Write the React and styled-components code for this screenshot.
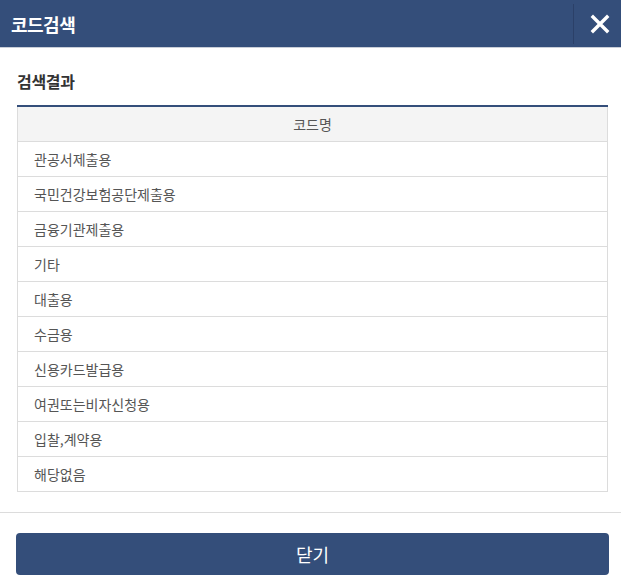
import React from "react";
import styled, { createGlobalStyle } from "styled-components";

const Global = createGlobalStyle`
  html, body { margin: 0; padding: 0; background: #fff; }
  body { font-family: "Noto Sans CJK KR", "Noto Sans", sans-serif; }
  * { box-sizing: border-box; }
`;

const Modal = styled.div`
  width: 621px;
  height: 579px;
  display: flex;
  flex-direction: column;
  background: #fff;
`;

const Header = styled.header`
  height: 48px;
  background: #344e7a;
  display: flex;
  align-items: center;
  justify-content: space-between;
  border-bottom: 1px solid #c9ced8;
`;

const Title = styled.h1`
  margin: 0 0 0 11px;
  font-size: 18px;
  font-weight: 700;
  color: #fff;
  letter-spacing: -0.5px;
`;

const CloseBtn = styled.button`
  width: 48px;
  height: 40px;
  border: none;
  border-left: 1px solid #2b4068;
  background: transparent;
  display: flex;
  align-items: center;
  justify-content: center;
  padding: 0 0 0 4px;
  cursor: pointer;
`;

const Body = styled.div`
  padding: 20px 13px 0 17px;
  flex: 1;
`;

const SectionTitle = styled.h2`
  margin: 0 0 11px;
  font-size: 16px;
  font-weight: 700;
  color: #333;
  line-height: 26px;
  letter-spacing: -0.3px;
`;

const Table = styled.table`
  width: 591px;
  border-collapse: collapse;
  border-top: 2px solid #344e7a;
  font-size: 14px;
  color: #555;
`;

const Th = styled.th`
  height: 35px;
  padding: 0;
  background: #f4f4f4;
  border: 1px solid #dcdcdc;
  border-top: none;
  font-weight: 400;
  text-align: center;
  color: #555;
`;

const Td = styled.td`
  height: 35px;
  border: 1px solid #dcdcdc;
  padding: 0 16px;
  text-align: left;
`;

const Footer = styled.div`
  border-top: 1px solid #dcdcdc;
  padding: 20px 12px 4px 16px;
`;

const CloseButton = styled.button`
  width: 593px;
  height: 42px;
  background: #344e7a;
  color: #fff;
  border: none;
  border-radius: 4px;
  font-family: inherit;
  font-size: 18px;
  cursor: pointer;
`;

const rows = [
  "관공서제출용",
  "국민건강보험공단제출용",
  "금융기관제출용",
  "기타",
  "대출용",
  "수금용",
  "신용카드발급용",
  "여권또는비자신청용",
  "입찰,계약용",
  "해당없음",
];

export default function App() {
  return (
    <Modal>
      <Global />
      <Header>
        <Title>코드검색</Title>
        <CloseBtn aria-label="닫기">
          <svg width="20" height="20" viewBox="0 0 20 20">
            <path d="M3 3 L17 17 M17 3 L3 17" stroke="#fff" strokeWidth="3.4" strokeLinecap="square" />
          </svg>
        </CloseBtn>
      </Header>
      <Body>
        <SectionTitle>검색결과</SectionTitle>
        <Table>
          <thead>
            <tr><Th>코드명</Th></tr>
          </thead>
          <tbody>
            {rows.map((r) => (
              <tr key={r}><Td>{r}</Td></tr>
            ))}
          </tbody>
        </Table>
      </Body>
      <Footer>
        <CloseButton>닫기</CloseButton>
      </Footer>
    </Modal>
  );
}
